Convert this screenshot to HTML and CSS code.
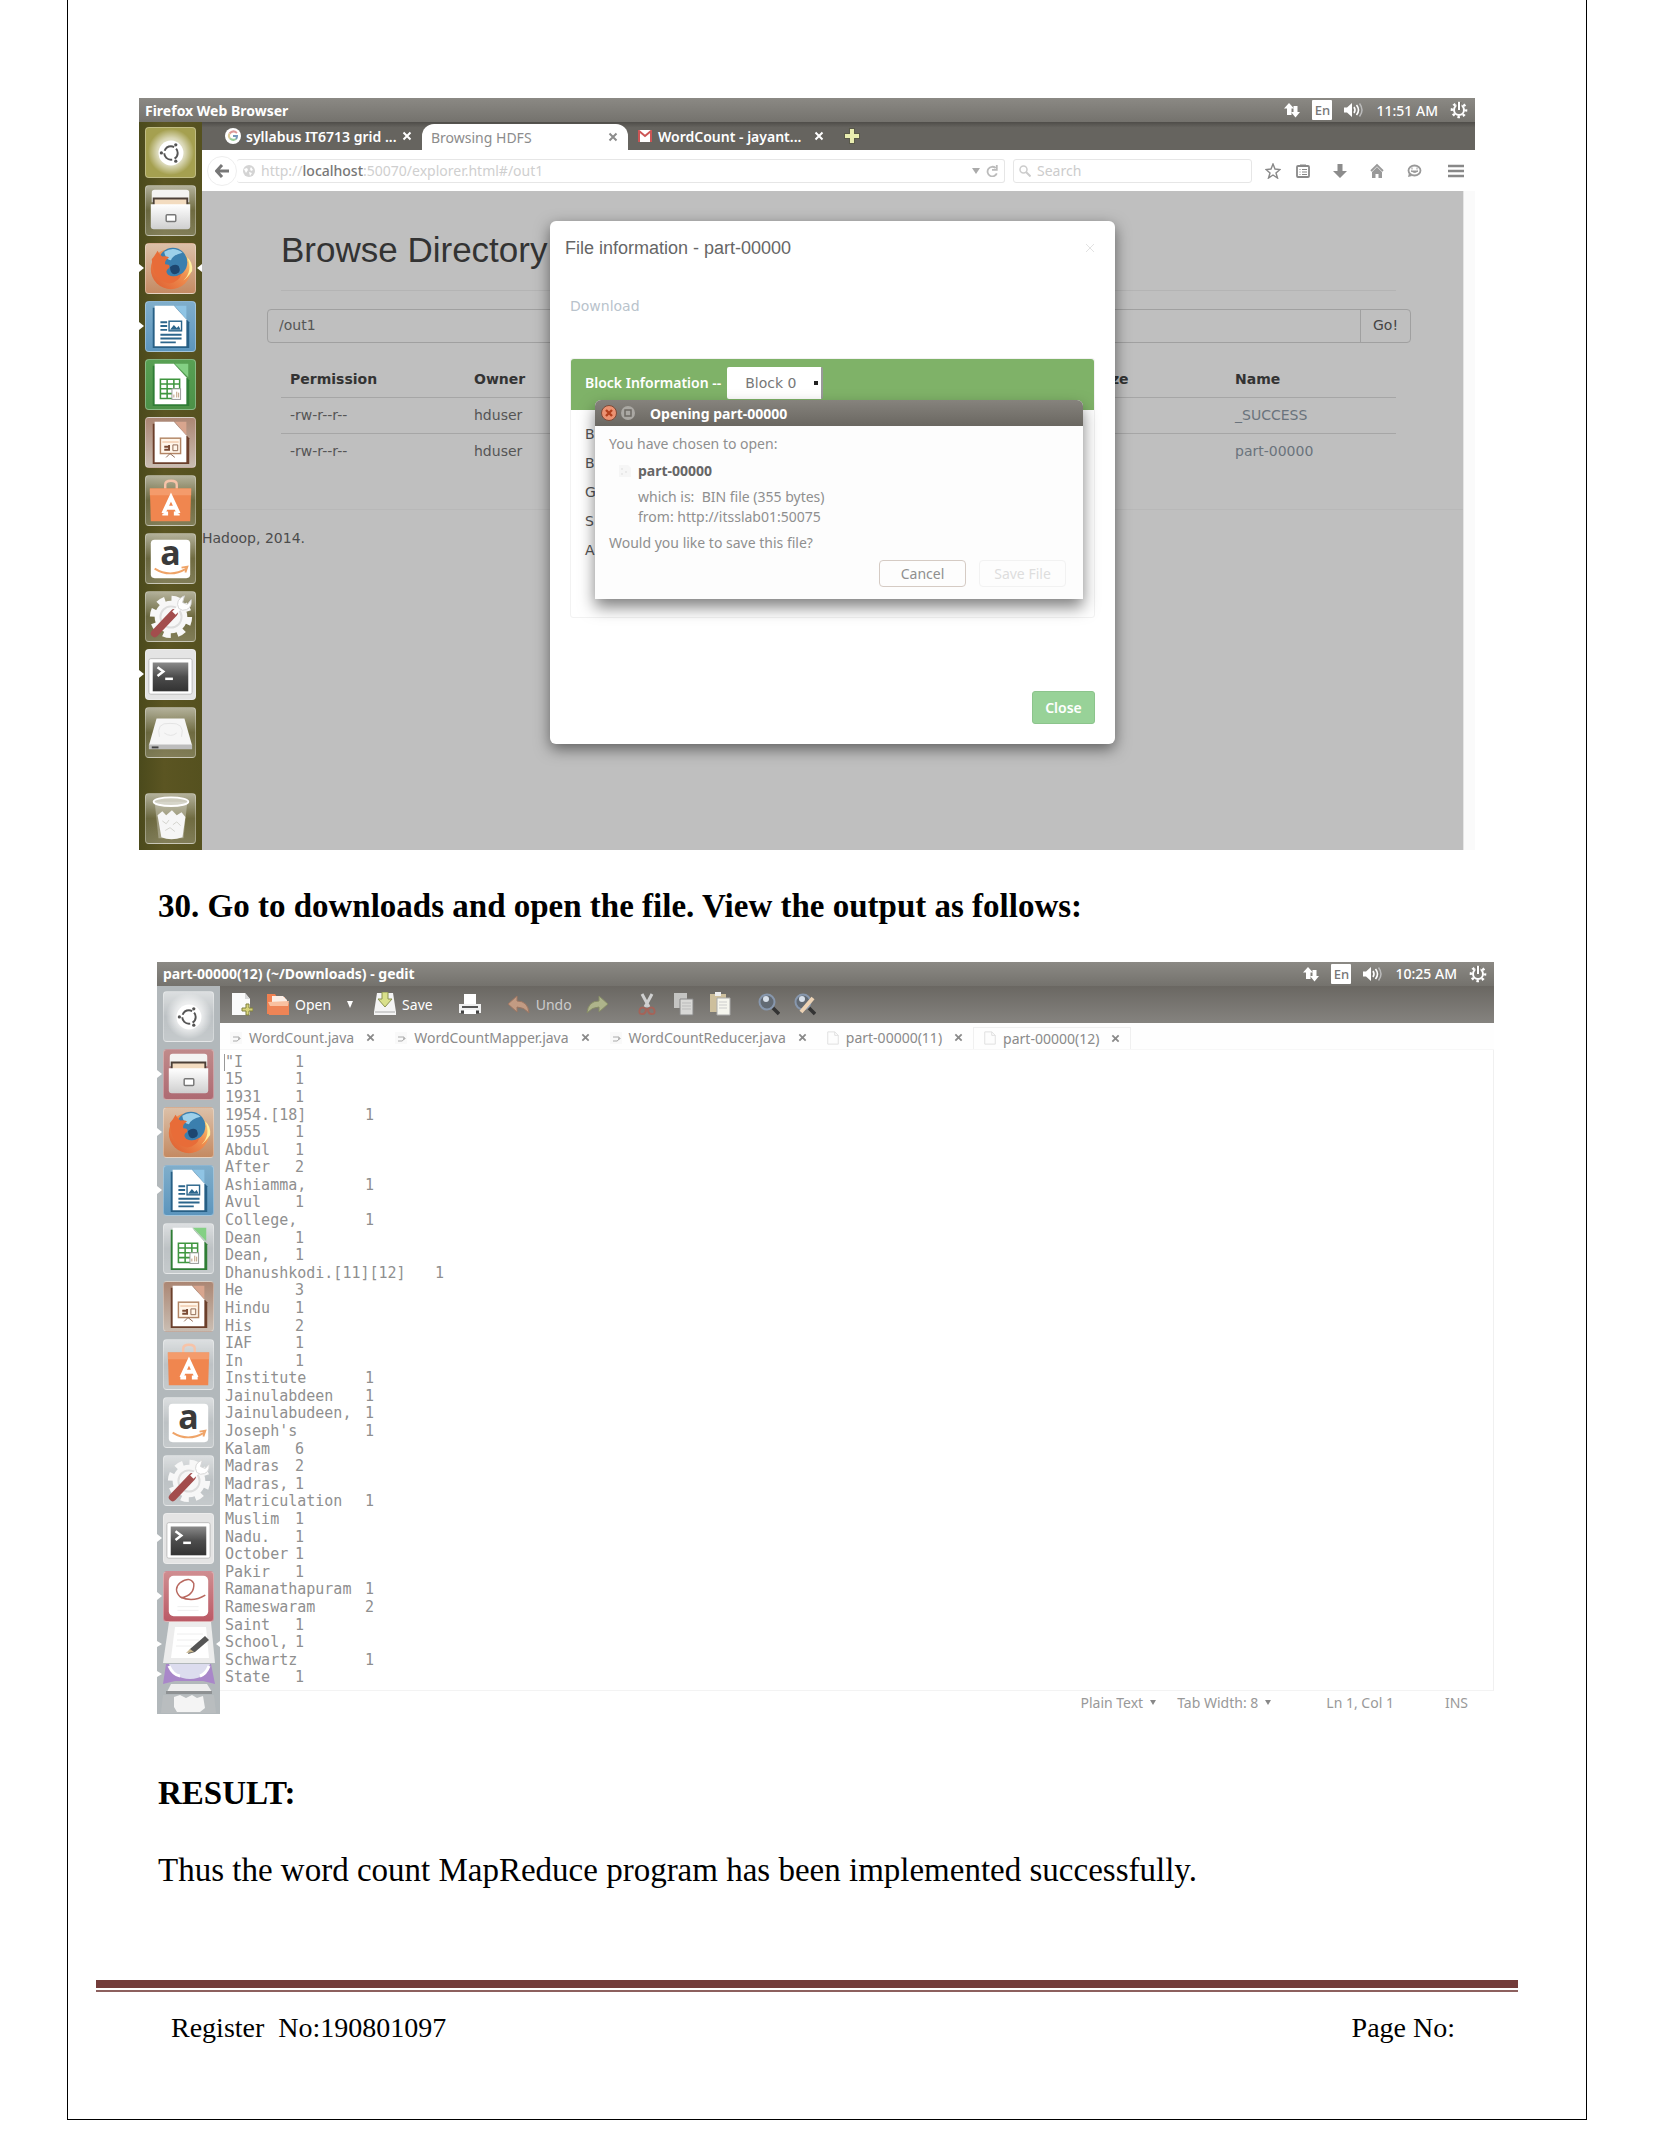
FILE: index.html
```html
<!DOCTYPE html>
<html lang="en">
<head>
<meta charset="utf-8">
<title>Word count MapReduce program</title>
<link rel="stylesheet" href="styles.css">
</head>
<body>
<svg class="defs" aria-hidden="true">
  <defs>
    <linearGradient id="drawer" x1="0" y1="0" x2="0" y2="1"><stop offset="0" stop-color="#fff"/><stop offset="1" stop-color="#cfcfcf"/></linearGradient>
    <linearGradient id="fox" x1="0" y1="1" x2="1" y2="0"><stop offset="0" stop-color="#dd5a2e"/><stop offset=".6" stop-color="#f09050"/><stop offset="1" stop-color="#ffe98a"/></linearGradient>
    <linearGradient id="screen" x1="0" y1="0" x2="0" y2="1"><stop offset="0" stop-color="#8a8a8a"/><stop offset=".5" stop-color="#4c4c4c"/><stop offset="1" stop-color="#333"/></linearGradient>
    <radialGradient id="halo"><stop offset="0" stop-color="#fff"/><stop offset=".6" stop-color="#fff" stop-opacity=".6"/><stop offset="1" stop-color="#fff" stop-opacity="0"/></radialGradient>
  </defs>
  <symbol id="i-dash" viewBox="0 0 51 51"><circle cx="26" cy="25" r="24" fill="url(#halo)"/><circle cx="26" cy="26" r="13" fill="#fff"/><circle cx="26" cy="26" r="7" fill="none" stroke="#555" stroke-width="2" stroke-dasharray="12 2.6" stroke-dashoffset="5"/><circle cx="16" cy="26" r="1.700" fill="#555"/><circle cx="31" cy="17.500" r="1.700" fill="#555"/><circle cx="31" cy="34.500" r="1.700" fill="#555"/></symbol>
  <symbol id="i-files" viewBox="0 0 51 51"><path d="M6 7q0-3 3-3h33q3 0 3 3v10H6z" fill="#f4f4f2"/><path d="M7 12h37v8H7z" fill="#4c4037"/><path d="M9 14h33v6H9z" fill="#f3dcc0"/><path d="M5 19h41v23q0 3-3 3H8q-3 0-3-3z" fill="url(#drawer)"/><rect x="21" y="30" width="10" height="7" rx="1" fill="#fff" stroke="#777" stroke-width="1.500"/></symbol>
  <symbol id="i-fox" viewBox="0 0 51 51"><circle cx="26" cy="26" r="21" fill="url(#fox)"/><circle cx="28" cy="19" r="15" fill="#3b7fae"/><path d="M19 8q10-6 19 1-10 2-12 8-6-1-7-9z" fill="#9dd0ea"/><path d="M25 24q5-4 9-1 3 6-2 8-7 2-7-7z" fill="#1d4670"/><path d="M6 16q4-5 6-9 2 4 5 6 4-1 7 1-5 3-4 7 6 0 4 4-5 3-1 7 6 4 14-1-3 9-13 10Q7 38 6 16z" fill="#e86c38"/><path d="M43 14q6 14-4 24 4-3 9-10 1-9-5-14z" fill="#fff0a0"/></symbol>
  <symbol id="i-writer" viewBox="0 0 51 51"><path d="M7 6h24l14 15v27H7z" fill="#275f85"/><path d="M9 4h20l13 14v28H9z" fill="#fff"/><path d="M30 4h12v14z" fill="#8fc4e4"/><path d="M15 21h7M15 25h7M15 29h7M15 34h22M15 38h22M15 42h16" stroke="#2c668c" stroke-width="2"/><rect x="24" y="20" width="13" height="10" fill="#fff" stroke="#2c668c" stroke-width="1.500"/><path d="M25 29l4-5 3 3 2-2 2 4z" fill="#2c668c"/></symbol>
  <symbol id="i-calc" viewBox="0 0 51 51"><path d="M7 6h24l14 15v27H7z" fill="#2f7d35"/><path d="M9 4h20l13 14v28H9z" fill="#fff"/><path d="M30 4h14v14z" fill="#84d084"/><path d="M15 20h20v20H15zM15 25h20M15 30h20M15 35h20M22 20v20M29 20v20" fill="none" stroke="#3f963f" stroke-width="1.600"/><rect x="27" y="30" width="9" height="11" fill="#fff" stroke="#999"/><path d="M29 39v-3M32 39v-6M34 39v-5" stroke="#b97"/></symbol>
  <symbol id="i-impress" viewBox="0 0 51 51"><path d="M7 6h24l14 15v27H7z" fill="#6b3f2b"/><path d="M9 4h20l13 14v28H9z" fill="#fff"/><path d="M30 4h12v14z" fill="#d8a58e"/><rect x="15" y="21" width="21" height="16" fill="#fff6ea" stroke="#b28565" stroke-width="1.500"/><path d="M17 25h17" stroke="#e8b58b"/><path d="M19 30h4M19 33h4M24 28v6" stroke="#7a4a33" stroke-width="2"/><path d="M28 28h5v6h-5zM21 41l4-4 5 4" fill="none" stroke="#8e6650"/></symbol>
  <symbol id="i-soft" viewBox="0 0 51 51"><path d="M20 14V9q0-4 6-4t6 4v5" fill="none" stroke="#f7c3a8" stroke-width="2.500"/><path d="M4 13h43l-1 34H5z" fill="#f0864f"/><path d="M4 13h43v7H4z" fill="#f49b6b"/><path d="M18 39l8-17 8 17M17 39h6M29 39h6M20 33h12" fill="none" stroke="#fff" stroke-width="4"/></symbol>
  <symbol id="i-amazon" viewBox="0 0 51 51"><rect x="5" y="6" width="41" height="40" rx="4" fill="#fff"/><path d="M9 36q16 10 33 0M37 35l6-1-2 6" fill="none" stroke="#efa468" stroke-width="2"/></symbol>
  <symbol id="i-tools" viewBox="0 0 51 51"><circle cx="26" cy="26" r="17" fill="#f7f7f7"/><circle cx="26" cy="26" r="19" fill="none" stroke="#f7f7f7" stroke-width="6" stroke-dasharray="8 6.920"/><circle cx="26" cy="26" r="11" fill="none" stroke="#ddd" stroke-width="2"/><path d="M9 43L29 22" stroke="#a34d4d" stroke-width="8" stroke-linecap="round"/><path d="M29 22l7-7" stroke="#fff" stroke-width="5"/><path d="M34 17q-4-9 6-13l-2 7 5 2 4-5q1 11-9 11z" fill="#fff" stroke="#d5d5d5"/></symbol>
  <symbol id="i-term" viewBox="0 0 51 51"><rect x="3" y="9" width="45" height="37" rx="2" fill="#fff" stroke="#bbb"/><rect x="7" y="13" width="37" height="30" fill="url(#screen)"/><path d="M12 18l6 4.500-6 4.500" fill="none" stroke="#fff" stroke-width="2.600"/><path d="M20 30h8" stroke="#fff" stroke-width="2.600"/></symbol>
  <symbol id="i-disk" viewBox="0 0 51 51"><path d="M11 11h29l8 28H3z" fill="#f6f6f6"/><path d="M3 38h45v5H3z" fill="#bdbdbd"/><path d="M6 41h7" stroke="#444" stroke-width="2"/><path d="M14 30q-4-15 11-14 16-1 12 14M19 26q7 5 13 0" fill="none" stroke="#e3e3e3"/></symbol>
  <symbol id="i-trash" viewBox="0 0 51 51"><path d="M9 8l4 38h26l4-38z" fill="#fff" fill-opacity=".3"/><ellipse cx="26" cy="8" rx="18" ry="4.500" fill="#e9e9e4" fill-opacity=".6" stroke="#fff" stroke-width="2"/><path d="M12 22l5-4 4 4 6-5 5 5 5-3 4 5-3 21q-12 4-22 0z" fill="#f6f6f6"/><path d="M17 28l4 3 3-4M28 32l4-3 4 4M20 38l5-3 5 4" fill="none" stroke="#d2d2cc"/></symbol>
  <symbol id="i-reader" viewBox="0 0 51 51"><rect x="5" y="4" width="41" height="42" rx="5" fill="#fff"/><path d="M43 24Q30 32 17 26 9 18 17 11q10-7 14 1 1 12-13 15" fill="none" stroke="#b8685f" stroke-width="1.500"/><path d="M14 36h22M14 40h22" stroke="#eee"/></symbol>
  <symbol id="i-net" viewBox="0 0 16 16"><path d="M5 1L0 6.500H3V13h4.500V6.500H10z" fill="#fff"/><path d="M11.500 15.500L16 10H13.500V4h-4v6H7z" fill="#fff"/></symbol>
  <symbol id="i-sound" viewBox="0 0 20 16"><path d="M0 5.500h3L8 1v14l-5-4.500H0z" fill="#fff"/><path d="M10 5q2 3 0 6M12.500 3q4 5 0 10" fill="none" stroke="#fff" stroke-width="1.600"/><path d="M15.500 1.500q5 6.500 0 13" fill="none" stroke="#bbb" stroke-width="1.500"/></symbol>
  <symbol id="i-gear" viewBox="0 0 18 18"><circle cx="9" cy="9" r="5" fill="none" stroke="#fff" stroke-width="2"/><circle cx="9" cy="9" r="7" fill="none" stroke="#fff" stroke-width="2.600" stroke-dasharray="2.500 3" stroke-dashoffset="1"/><path d="M9 1v8" stroke="#77746f" stroke-width="5"/><path d="M9 1v8" stroke="#fff" stroke-width="2"/></symbol>
  <symbol id="i-cross" viewBox="0 0 10 10"><path d="M1.500 1.500l7 7M8.500 1.500l-7 7" fill="none" stroke="currentColor" stroke-width="2"/></symbol>
  <symbol id="i-java" viewBox="0 0 14 14"><path d="M1 1h12v12H1z" fill="#f9f9f9"/><path d="M4 6h6q0 4-2 4H4M10 7h1v1h-1" fill="none" stroke="#aaa"/></symbol>
  <symbol id="i-doc" viewBox="0 0 14 16"><path d="M1 1h8l4 4v10H1zM9 1v4h4" fill="#fdfdfd" stroke="#ddd"/></symbol>
</svg>

<main class="sheet">
  <section class="desktop desktop-a">
    <header class="panel">
      <span class="panel-title">Firefox Web Browser</span>
      <div class="tray">
        <svg class="ic16"><use href="#i-net"/></svg><span class="lang">En</span><svg class="ic20"><use href="#i-sound"/></svg><span>11:51 AM</span><svg class="ic18"><use href="#i-gear"/></svg>
      </div>
    </header>
    <div class="workspace">
      <nav class="launcher olive">
        <ul>
          <li class="tile t-dash"><svg><use href="#i-dash"/></svg></li>
          <li class="tile t-plain"><svg><use href="#i-files"/></svg></li>
          <li class="tile t-fox run focus"><svg><use href="#i-fox"/></svg></li>
          <li class="tile t-blue run"><svg><use href="#i-writer"/></svg></li>
          <li class="tile t-green"><svg><use href="#i-calc"/></svg></li>
          <li class="tile t-brown"><svg><use href="#i-impress"/></svg></li>
          <li class="tile t-plain"><svg><use href="#i-soft"/></svg></li>
          <li class="tile t-plain"><svg><use href="#i-amazon"/></svg><span class="amazon-a">a</span></li>
          <li class="tile t-plain"><svg><use href="#i-tools"/></svg></li>
          <li class="tile t-light run"><svg><use href="#i-term"/></svg></li>
          <li class="tile t-plain"><svg><use href="#i-disk"/></svg></li>
          <li class="tile t-plain last"><svg><use href="#i-trash"/></svg></li>
        </ul>
      </nav>
      <div class="browser">
        <div class="btabs">
          <div class="btab first"><svg class="ic16" viewBox="0 0 16 16"><circle cx="8" cy="8" r="8" fill="#fff"/><path d="M12 5Q8 1.500 4.500 5.500" fill="none" stroke="#d99" stroke-width="2"/><path d="M4.500 5.500q-1.500 3 .500 5" fill="none" stroke="#dc9" stroke-width="2"/><path d="M5 10.500q3 2.500 6 .500" fill="none" stroke="#9c9" stroke-width="2"/><path d="M8 8h4q0 2-1 3" fill="none" stroke="#79b" stroke-width="2"/></svg><span>syllabus IT6713 grid ...</span><button class="x" aria-label="Close tab"><svg><use href="#i-cross"/></svg></button></div>
          <div class="btab active"><span>Browsing HDFS</span><button class="x" aria-label="Close tab"><svg><use href="#i-cross"/></svg></button></div>
          <div class="btab third"><svg class="ic14" viewBox="0 0 14 12"><path d="M0 0h14v12H0z" fill="#fff"/><path d="M1 12V1l6 5 6-5v11" fill="none" stroke="#c55" stroke-width="2"/></svg><span>WordCount - jayant...</span><button class="x" aria-label="Close tab"><svg><use href="#i-cross"/></svg></button></div>
          <button class="newtab" aria-label="New tab"><svg class="ic16" viewBox="0 0 16 16"><path d="M5 0h6v5h5v6h-5v5H5v-5H0V5h5z" fill="#59594a"/><path d="M6 1h4v5h5v4h-5v5H6v-5H1V6h5z" fill="#e9edb0"/></svg></button>
        </div>
        <div class="navbar">
          <button class="back" aria-label="Back"><svg viewBox="0 0 14 14"><path d="M7 1L1.500 7 7 13M2 7h12" fill="none" stroke="#777" stroke-width="3"/></svg></button>
          <div class="urlbox"><svg class="ic12" viewBox="0 0 12 12"><circle cx="6" cy="6" r="6" fill="#d4d4d4"/><path d="M1 4l3-1 1 2-2 3zM8 2l2 3-2 1-1-2zM6 7l3 1-2 3z" fill="#fff"/></svg><div class="url" role="textbox" aria-label="Address">http://<b>localhost</b>:50070/explorer.html#/out1</div><svg class="ic8" viewBox="0 0 8 6"><path d="M0 0h8L4 6z" fill="#aaa"/></svg><svg class="ic12" viewBox="0 0 10 10"><path d="M8 2.500A4 4 0 1 0 9 7M9 0v4H5" fill="none" stroke="#bbb" stroke-width="1.500"/></svg></div>
          <label class="searchbox"><svg class="ic12" viewBox="0 0 12 12"><circle cx="4.500" cy="4.500" r="3.500" fill="none" stroke="#ccc" stroke-width="1.500"/><path d="M7 7l4.500 4.500" stroke="#ccc" stroke-width="2"/></svg><input type="text" placeholder="Search" aria-label="Search"></label>
          <div class="navicons">
            <svg viewBox="0 0 16 16"><path d="M8 1l2 5 5 .500-4 3.500 1.500 5L8 12l-4.500 3L5 10 1 6.500 6 6z" fill="none" stroke="#888" stroke-width="1.400"/></svg>
            <svg viewBox="0 0 16 16"><rect x="2" y="3" width="12" height="11" rx="1" fill="none" stroke="#888" stroke-width="1.800"/><path d="M5 2h6M4.500 6.500h1M7 6.500h5M4.500 9h1M7 9h5M4.500 11.500h1M7 11.500h5" stroke="#888" stroke-width="1.200"/></svg>
            <svg viewBox="0 0 16 16"><path d="M5.500 1h5v7H15l-7 7-7-7h4.500z" fill="#8c8c8c"/></svg>
            <svg viewBox="0 0 16 16"><path d="M2 8l6-6 6 6" fill="none" stroke="#999" stroke-width="1.800"/><path d="M3 9l5-5 5 5v6H9.500v-4h-3v4H3z" fill="#999"/></svg>
            <svg viewBox="0 0 16 16"><ellipse cx="8.500" cy="7.500" rx="6" ry="5" fill="none" stroke="#999" stroke-width="1.800"/><path d="M2 14l1-4 3 3z" fill="#999"/><path d="M6 4.500v2M11 4.500v2M5 8h7q-3 3-7 0z" stroke="#999" fill="#999"/></svg>
            <svg viewBox="0 0 16 16"><path d="M0 3h16M0 8h16M0 13h16" stroke="#888" stroke-width="2.400"/></svg>
          </div>
        </div>
        <div class="viewport">
          <div class="webpage">
            <div class="container">
              <h1>Browse Directory</h1>
              <form class="pathform"><input type="text" value="/out1" aria-label="Directory"><button type="button">Go!</button></form>
              <table>
                <thead><tr><th class="c1">Permission</th><th class="c2">Owner</th><th class="c3">Size</th><th>Name</th></tr></thead>
                <tbody>
                  <tr><td>-rw-r--r--</td><td>hduser</td><td></td><td><a href="#">_SUCCESS</a></td></tr>
                  <tr><td>-rw-r--r--</td><td>hduser</td><td></td><td><a href="#">part-00000</a></td></tr>
                </tbody>
              </table>
            </div>
            <footer class="webfoot">Hadoop, 2014.</footer>
            <div class="modal">
              <div class="modal-head"><h2>File information - part-00000</h2><button class="modal-x" aria-label="Close"><svg viewBox="0 0 10 10"><path d="M1 1l8 8M9 1L1 9" stroke="#e2e2e2" stroke-width="1"/></svg></button></div>
              <a class="download" href="#">Download</a>
              <div class="block">
                <div class="block-head"><label for="blk">Block Information --</label><select id="blk"><option>Block 0</option></select></div>
                <ul class="block-body"><li>B</li><li>B</li><li>G</li><li>S</li><li>A</li></ul>
              </div>
              <button class="close">Close</button>
              <div class="dialog">
                <div class="dialog-bar">
                  <svg viewBox="0 0 16 16"><circle cx="8" cy="8" r="7.500" fill="#ec9272" stroke="#7d4a38"/><path d="M5 5l6 6M11 5l-6 6" stroke="#b3401d" stroke-width="2.400"/></svg>
                  <svg viewBox="0 0 16 16"><circle cx="8" cy="8" r="7" fill="#aaa8a3"/><rect x="5" y="5" width="6" height="6" fill="none" stroke="#6d6a64" stroke-width="1.500"/></svg>
                  <span>Opening part-00000</span>
                </div>
                <div class="dialog-body">
                  <p>You have chosen to open:</p>
                  <div class="file"><svg viewBox="0 0 14 14"><path d="M1 1h9l3 3v9H1z" fill="#f6f6f6"/><path d="M3 5h2M7 8h2M3 10h2" stroke="#ddd"/></svg><b>part-00000</b></div>
                  <p class="meta">which is:&nbsp; BIN file (355 bytes)</p>
                  <p class="meta">from: http://itsslab01:50075</p>
                  <p class="ask">Would you like to save this file?</p>
                  <div class="actions"><button>Cancel</button><button class="dim">Save File</button></div>
                </div>
              </div>
            </div>
          </div>
          <div class="scroll"></div>
        </div>
      </div>
    </div>
  </section>

  <h3 class="step">30. Go to downloads and open the file. View the output as follows:</h3>

  <section class="desktop desktop-b">
    <header class="panel">
      <span class="panel-title">part-00000(12) (~/Downloads) - gedit</span>
      <div class="tray">
        <svg class="ic16"><use href="#i-net"/></svg><span class="lang">En</span><svg class="ic20"><use href="#i-sound"/></svg><span>10:25 AM</span><svg class="ic18"><use href="#i-gear"/></svg>
      </div>
    </header>
    <div class="workspace">
      <nav class="launcher silver">
        <ul>
          <li class="tile t-plain"><svg><use href="#i-dash"/></svg></li>
          <li class="tile t-rose run"><svg><use href="#i-files"/></svg></li>
          <li class="tile t-fox run"><svg><use href="#i-fox"/></svg></li>
          <li class="tile t-blue run"><svg><use href="#i-writer"/></svg></li>
          <li class="tile t-plain"><svg><use href="#i-calc"/></svg></li>
          <li class="tile t-brown"><svg><use href="#i-impress"/></svg></li>
          <li class="tile t-plain"><svg><use href="#i-soft"/></svg></li>
          <li class="tile t-plain"><svg><use href="#i-amazon"/></svg><span class="amazon-a">a</span></li>
          <li class="tile t-plain"><svg><use href="#i-tools"/></svg></li>
          <li class="tile t-light run"><svg><use href="#i-term"/></svg></li>
          <li class="tile t-red run"><svg><use href="#i-reader"/></svg></li>
        </ul>
        <svg class="folded" viewBox="0 0 63 91">
          <path d="M0 19l5 3-5 3zM63 19l-4 3 4 3zM0 49l5 3-5 3z" fill="#fff"/>
          <path d="M12 0h42l4 41H6z" fill="#ececec"/><path d="M18 5h31l3 31H14z" fill="#fff"/><path d="M20 12h26M20 18h22M19 24h16" stroke="#eee"/><path d="M33 27l15-13 4 4-14 12-7 2z" fill="#555"/><path d="M29 31l4-4 4 3z" fill="#c9b78f"/>
          <path d="M9 42h45l4 20-12-3H18L6 62z" fill="#a987c9"/><path d="M12 42h41q-4 15-20 15T12 42z" fill="#dcdcee"/><path d="M12 44q4 9 11 10M52 44q-3 8-9 10" stroke="#fff" stroke-width="3" fill="none"/>
          <path d="M14 62h36l5 8H10z" fill="#eee"/><path d="M9 69h46v3H9z" fill="#8e9193"/><path d="M6 73h51l2 18H4z" fill="#b9bdbf"/><path d="M17 75l6-2 6 3 6-3 5 3 6-2 2 12-5 4H20l-3-5z" fill="#f4f4f4"/>
        </svg>
      </nav>
      <div class="gedit">
        <div class="toolbar">
          <button aria-label="New"><svg viewBox="0 0 22 24"><path d="M1 1h13l5 6v16H1z" fill="#fafafa"/><path d="M14 1v6h5z" fill="#d8d8d8"/><path d="M15 12h3v4h4v3h-4v4h-3v-4h-4v-3h4z" fill="#d6d27a" stroke="#80803c"/></svg></button>
          <button class="open"><svg viewBox="0 0 22 24"><path d="M0 2h8l2 3h8v17H0z" fill="#f08050"/><path d="M5 4h11l4 4v10H5z" fill="#fbeee6"/><path d="M0 12l22-1v12H2z" fill="#ee8456"/><path d="M1 10l21-1-1 5H3z" fill="#f9c0a0"/></svg>Open</button>
          <button class="drop" aria-label="Recent files"><svg class="ic8" viewBox="0 0 8 8"><path d="M1 1h6L4 8z" fill="#fff"/></svg></button>
          <button class="save"><svg viewBox="0 0 22 24"><path d="M3 1h16l3 19v3H0v-3z" fill="#f4f4f4"/><path d="M8 0h6v7h4l-7 8-7-8h4z" fill="#d9e08b" stroke="#8a9150"/><path d="M1 20h20" stroke="#aaa"/></svg>Save</button>
          <button class="print" aria-label="Print"><svg viewBox="0 0 22 24"><path d="M5 2h12v11H5z" fill="#fff"/><path d="M0 12h22v9H0z" fill="#f0f0f0"/><path d="M3 15h16" stroke="#555" stroke-width="2"/><path d="M2 20h18" stroke="#444" stroke-width="3"/><path d="M5 18h12v4H5z" fill="#fff"/></svg></button>
          <button class="undo"><svg viewBox="0 0 22 24"><path d="M9 4v5q11 0 12 12-5-6-12-6v5L0 12z" fill="#c29b83" stroke="#9d7763"/></svg>Undo</button>
          <button class="redo" aria-label="Redo"><svg viewBox="0 0 22 24"><path d="M13 4v5Q2 9 1 21q5-6 12-6v5l9-8z" fill="#aeb48b" stroke="#868c66"/></svg></button>
          <button class="cut" aria-label="Cut"><svg viewBox="0 0 22 24"><path d="M6 2l7 13M16 2L9 15" stroke="#d0d0d0" stroke-width="3"/><path d="M4 17q2-3 6 0 0 5-4 5t-2-5zM12 17q4-3 6 0 2 5-2 5t-4-5z" fill="none" stroke="#a56358" stroke-width="2"/></svg></button>
          <button class="copy" aria-label="Copy"><svg viewBox="0 0 22 24"><path d="M1 1h13v15H1z" fill="#c4c4c2"/><path d="M7 7h13v16H7z" fill="#d8d8d6" stroke="#888"/><path d="M9 11h9M9 14h9M9 17h9" stroke="#bbb"/></svg></button>
          <button class="paste" aria-label="Paste"><svg viewBox="0 0 22 24"><path d="M1 2h16v18H1z" fill="#cdbf9d"/><path d="M6 0h6v4H6z" fill="#eee"/><path d="M8 6h13v17H8z" fill="#f6f6ee" stroke="#aaa"/><path d="M10 10h8M10 13h8M10 16h8" stroke="#ccc"/></svg></button>
          <button class="find" aria-label="Find"><svg viewBox="0 0 22 24"><circle cx="9" cy="10" r="7.500" fill="#626a73" stroke="#8797ad" stroke-width="2"/><circle cx="8" cy="7" r="3" fill="#d8e0ea"/><path d="M15 16l6 6" stroke="#333" stroke-width="3.500"/></svg></button>
          <button aria-label="Replace"><svg viewBox="0 0 22 24"><circle cx="9" cy="10" r="7.500" fill="#626a73" stroke="#8797ad" stroke-width="2"/><circle cx="8" cy="7" r="3" fill="#d8e0ea"/><path d="M15 16l6 6" stroke="#333" stroke-width="3.500"/><path d="M7 20L19 6" stroke="#ecd2b4" stroke-width="4"/></svg></button>
        </div>
        <div class="gtabs">
          <div class="gtab"><svg class="ic14"><use href="#i-java"/></svg><span>WordCount.java</span><button class="x" aria-label="Close"><svg><use href="#i-cross"/></svg></button></div>
          <div class="gtab"><svg class="ic14"><use href="#i-java"/></svg><span>WordCountMapper.java</span><button class="x" aria-label="Close"><svg><use href="#i-cross"/></svg></button></div>
          <div class="gtab"><svg class="ic14"><use href="#i-java"/></svg><span>WordCountReducer.java</span><button class="x" aria-label="Close"><svg><use href="#i-cross"/></svg></button></div>
          <div class="gtab"><svg class="ic14"><use href="#i-doc"/></svg><span>part-00000(11)</span><button class="x" aria-label="Close"><svg><use href="#i-cross"/></svg></button></div>
          <div class="gtab on"><svg class="ic14"><use href="#i-doc"/></svg><span>part-00000(12)</span><button class="x" aria-label="Close"><svg><use href="#i-cross"/></svg></button></div>
        </div>
        <div class="editor">
          <div class="caret">"I&#9;1</div><div>15&#9;1</div><div>1931&#9;1</div><div>1954.[18]&#9;1</div><div>1955&#9;1</div><div>Abdul&#9;1</div><div>After&#9;2</div><div>Ashiamma,&#9;1</div><div>Avul&#9;1</div><div>College,&#9;1</div><div>Dean&#9;1</div><div>Dean,&#9;1</div><div>Dhanushkodi.[11][12]&#9;1</div><div>He&#9;3</div><div>Hindu&#9;1</div><div>His&#9;2</div><div>IAF&#9;1</div><div>In&#9;1</div><div>Institute&#9;1</div><div>Jainulabdeen&#9;1</div><div>Jainulabudeen,&#9;1</div><div>Joseph's&#9;1</div><div>Kalam&#9;6</div><div>Madras&#9;2</div><div>Madras,&#9;1</div><div>Matriculation&#9;1</div><div>Muslim&#9;1</div><div>Nadu.&#9;1</div><div>October&#9;1</div><div>Pakir&#9;1</div><div>Ramanathapuram&#9;1</div><div>Rameswaram&#9;2</div><div>Saint&#9;1</div><div>School,&#9;1</div><div>Schwartz&#9;1</div><div>State&#9;1</div>
        </div>
        <div class="status">
          <button>Plain Text <svg class="ic6" viewBox="0 0 6 5"><path d="M0 0h6L3 5z" fill="#888"/></svg></button>
          <button>Tab Width: 8 <svg class="ic6" viewBox="0 0 6 5"><path d="M0 0h6L3 5z" fill="#888"/></svg></button>
          <span class="pos">Ln 1, Col 1</span><span class="ins">INS</span>
        </div>
      </div>
    </div>
  </section>

  <h3 class="result">RESULT:</h3>
  <p class="conclusion">Thus the word count MapReduce program has been implemented successfully.</p>
  <footer class="sheet-foot"><span>Register&nbsp; No:190801097</span><span>Page No:</span></footer>
</main>
</body>
</html>
```
FILE: styles.css
```css
* { box-sizing: border-box; }
body { margin: 0; background: #fff; padding-bottom: 33px; }
h1, h2, h3, p, ul { margin: 0; padding: 0; font-weight: normal; }
ul { list-style: none; }
button { font: inherit; color: inherit; border: 0; background: none; padding: 0; display: flex; align-items: center; }
svg { flex: none; display: block; }
.defs { position: absolute; width: 0; height: 0; }
.ic6 { width: 6px; height: 5px; }
.ic8 { width: 8px; height: 8px; }
.ic12 { width: 12px; height: 12px; }
.ic14 { width: 14px; height: 14px; }
.ic16 { width: 16px; height: 16px; }
.ic18 { width: 18px; height: 18px; }
.ic20 { width: 20px; height: 16px; }
.x svg { width: 10px; height: 10px; }

.sheet { margin: 0 67px; border: 1px solid #000; border-top: 0; padding-top: 98px; color: #000; font-family: "Liberation Serif", "Times New Roman", serif; }
.step, .result, .conclusion { font-size: 33px; line-height: 36px; margin-left: 90px; }
.step, .result { font-weight: bold; }
.step { margin-top: 38px; margin-bottom: 38px; }
.result { margin-top: 61px; }
.conclusion { margin-top: 41px; }
.sheet-foot { margin: 92px 68px 0 28px; padding: 24px 63px 75px 75px; display: flex; justify-content: space-between; font-size: 28px; line-height: 32px; position: relative; border-top: 8px solid #733c3a; }
.sheet-foot::before { content: ""; position: absolute; left: 0; right: 0; top: 2px; height: 2px; background: #8d605e; }

.desktop { aspect-ratio: 16 / 9; display: flex; flex-direction: column; font-family: "Noto Sans", sans-serif; font-size: 14px; overflow: hidden; }
.desktop-a { margin: 0 111px 0 71px; }
.desktop-b { margin: 0 92px 0 89px; }
.panel { height: 24px; flex: none; display: flex; justify-content: space-between; align-items: center; padding: 0 7px 0 6px; background: linear-gradient(#8b8984, #74726d); color: #fff; }
.panel-title { font-weight: bold; }
.tray { display: flex; align-items: center; gap: 12px; font-weight: 500; }
.lang { width: 20px; height: 20px; line-height: 20px; text-align: center; background: #fff; color: #777; font-size: 13px; border-radius: 1px; }
.workspace { flex: 1; min-height: 0; display: flex; }

.launcher { width: 63px; flex: none; padding-top: 5px; overflow: hidden; }
.launcher ul { display: flex; flex-direction: column; align-items: center; gap: 7px; }
.olive { background: linear-gradient(90deg, #4b4a1c, #5b5522 40%, #55511f); }
.silver { background: #b2b8bb; }
.tile { width: 51px; height: 51px; border-radius: 4px; position: relative; border: 1px solid rgba(255, 255, 255, .3); flex: none; }
.tile svg { width: 49px; height: 49px; }
.last { margin-top: 28px; }
.t-plain { background: linear-gradient(rgba(255, 255, 255, .55), rgba(255, 255, 255, .15) 50%, rgba(255, 255, 255, .25)); }
.t-dash { background: #a5a050; }
.t-fox { background: linear-gradient(#dcc0a8, #c48a62); }
.t-blue { background: linear-gradient(#7faecb, #5c95bd); }
.t-green { background: linear-gradient(#58a053, #4c9148); }
.t-brown { background: linear-gradient(#ab8673, #c9bdb2); }
.t-rose { background: linear-gradient(#c08a8a, #ae6a72); }
.t-red { background: linear-gradient(#cf8d90, #bb5a66); }
.t-light { background: #e4e4e4; }
.run::before { content: ""; position: absolute; left: -7px; top: 20px; border: 4px solid transparent; border-left: 5px solid #fff; border-right: 0; }
.focus::after { content: ""; position: absolute; right: -7px; top: 20px; border: 4px solid transparent; border-right: 5px solid #fff; border-left: 0; }
.amazon-a { position: absolute; left: 0; right: 0; top: 0; text-align: center; font: bold 34px/36px "Noto Sans", sans-serif; color: #3a3a3a; }
.folded { width: 63px; height: 91px; }

.browser, .gedit { flex: 1; min-width: 0; display: flex; flex-direction: column; }
.btabs { height: 28px; flex: none; display: flex; background: linear-gradient(#4f4d49, #66645f 20%, #66645f); color: #fff; }
.btab { display: flex; align-items: center; gap: 6px; font-weight: 600; white-space: nowrap; }
.btab .x { margin-left: auto; }
.first { width: 220px; padding: 0 10px 0 23px; }
.first { gap: 5px; }
.active { width: 206px; padding: 0 10px 0 9px; background: #fff; color: #8c8c8c; font-weight: normal; border-radius: 12px 12px 0 0; margin-top: 2px; }
.third { width: 200px; padding: 0 4px 0 10px; }
.third .ic14 { height: 12px; }
.newtab { margin-left: 16px; }
.navbar { height: 41px; flex: none; display: flex; align-items: center; background: #fff; padding: 0 11px 0 5px; }
.back { width: 30px; height: 30px; border-radius: 50%; border: 1px solid #eee; justify-content: center; }
.back svg { width: 14px; height: 14px; }
.urlbox, .searchbox { height: 24px; display: flex; align-items: center; border: 1px solid #e6e6e6; border-radius: 3px; }
.urlbox { flex: 1; border-left: 0; padding: 0 6px; gap: 6px; }
.url { flex: 1; color: #cfcfcf; white-space: nowrap; }
.url b { font-weight: 500; color: #777; }
.searchbox { width: 239px; margin-left: 8px; padding: 0 5px; gap: 6px; }
.searchbox input { border: 0; outline: 0; width: 100%; font: inherit; background: none; padding: 0; }
.searchbox input::placeholder { color: #ccc; opacity: 1; }
.navicons { margin-left: 13px; display: flex; gap: 21px; }
.navicons svg { width: 16px; height: 16px; }
.navicons svg:first-child { margin-right: -7px; }
.navicons svg:last-child { margin-left: 5px; }

.viewport { flex: 1; min-height: 0; display: flex; }
.webpage { flex: 1; min-width: 0; background: #bfbfbf; position: relative; color: #555; font-family: "DejaVu Sans", sans-serif; font-size: 14px; }
.scroll { width: 12px; background: #fafafa; border-left: 1px solid #e5e5e5; }
.container { margin: 0 67px 0 79px; padding-top: 39px; }
.container h1 { font-family: "Liberation Sans", Arial, sans-serif; font-size: 35px; line-height: 40px; color: #333; padding-bottom: 20px; border-bottom: 1px solid #b4b4b4; }
.pathform { display: flex; margin: 18px -15px 0 -14px; height: 34px; border: 1px solid #a0a0a0; border-radius: 4px; }
.pathform input { flex: 1; border: 0; background: none; font: inherit; color: #555; padding: 0 11px 3px; }
.pathform button { width: 50px; justify-content: center; border-left: 1px solid #a0a0a0; color: #444; padding-bottom: 2px; }
table { width: 100%; margin-top: 18px; border-collapse: collapse; table-layout: fixed; }
th, td { text-align: left; height: 36px; padding: 0 9px; line-height: 20px; border-bottom: 1px solid #a6a6a6; }
tr:last-child td { border-bottom: 0; }
th { color: #333; }
.c1 { width: 184px; }
.c2 { width: 622px; }
.c3 { width: 139px; }
td a { color: #6a737c; text-decoration: none; }
.webfoot { margin-top: 40px; padding-top: 18px; border-top: 1px solid #b8b8b8; line-height: 20px; color: #4c4c4c; }

.modal { position: absolute; left: 0; right: 0; top: 30px; margin: 0 auto; width: 565px; height: 523px; background: #fff; border-radius: 6px; box-shadow: 0 5px 15px rgba(0, 0, 0, .5); padding: 15px 20px 20px; display: flex; flex-direction: column; }
.modal-head { display: flex; justify-content: space-between; margin-left: -5px; }
.modal-head h2 { font: 18px/24px "Liberation Sans", Arial, sans-serif; color: #666; }
.modal-x svg { width: 10px; height: 10px; }
.download { margin-top: 36px; line-height: 20px; color: #b9c3cc; text-decoration: none; }
.block { margin-top: 42px; height: 260px; border: 1px solid #f2f2f2; border-radius: 3px; }
.block-head { height: 51px; background: #7fb268; border-radius: 3px 3px 0 0; display: flex; align-items: center; gap: 6px; padding: 0 0 4px 14px; color: #fff; font-weight: 600; font-family: "Noto Sans", sans-serif; }
.block-head select { appearance: none; width: 96px; height: 32px; border: 0; border-right: 2px solid #999; border-radius: 2px; padding: 0 18px; font: 14px "DejaVu Sans", sans-serif; color: #777; background: linear-gradient(#222, #222) 87px 14px / 4px 4px no-repeat #fff; }
.block-body { padding: 10px 0 0 14px; line-height: 29px; }
.close { margin-top: auto; align-self: flex-end; width: 63px; height: 33px; justify-content: center; background: #98d298; border: 1px solid #8cc48c; border-radius: 3px; color: #fff; font: 600 14px "Noto Sans", sans-serif; }

.dialog { position: absolute; left: 45px; top: 179px; width: 488px; background: #fdfdfd; box-shadow: 0 8px 16px rgba(0, 0, 0, .5); border-radius: 6px 6px 0 0; font: 14px "Noto Sans", sans-serif; color: #8f8f8f; }
.dialog-bar { height: 26px; display: flex; align-items: center; gap: 3px; padding-left: 6px; background: linear-gradient(#86837d, #6a6761); border-radius: 6px 6px 0 0; color: #fff; font-weight: bold; }
.dialog-bar svg { width: 16px; height: 16px; }
.dialog-bar span { margin-left: 11px; }
.dialog-body { padding: 8px 17px 12px 14px; line-height: 20px; }
.file { display: flex; align-items: center; gap: 6px; margin: 7px 0 6px 9px; color: #666; }
.file svg { width: 14px; height: 14px; }
.meta { padding-left: 29px; }
.ask { margin-top: 6px; }
.actions { display: flex; justify-content: flex-end; gap: 13px; margin-top: 7px; }
.actions button { width: 87px; height: 27px; justify-content: center; border: 1px solid #d5cbc4; border-radius: 4px; }
.actions .dim { color: #ddd; border-color: #f2f2f2; }

.toolbar { height: 37px; flex: none; display: flex; align-items: center; padding-left: 11px; background: linear-gradient(#6a6762, #85837f); color: #fff; }
.toolbar button { gap: 6px; }
.toolbar svg:not(.ic8) { width: 22px; height: 24px; }
.toolbar .open { margin-left: 14px; }
.toolbar .drop { margin-left: 15px; }
.toolbar .save { margin-left: 20px; }
.toolbar .print { margin-left: 26px; }
.toolbar .undo { margin-left: 27px; color: #ccc; }
.toolbar .redo { margin-left: 14px; }
.toolbar .cut { margin-left: 28px; }
.toolbar .copy { margin-left: 15px; }
.toolbar .paste { margin-left: 14px; }
.toolbar .find { margin-left: 27px; margin-right: 14px; }
.gtabs { height: 27px; flex: none; display: flex; padding-top: 4px; color: #8a8a8a; border-bottom: 1px solid #f7f7f7; background: #fefefe; }
.gtab { display: flex; align-items: center; gap: 6px; padding: 0 10px 0 9px; }
.gtab .x { margin-left: 6px; }
.gtab .x svg { width: 9px; height: 9px; }
.gtab.on { border: 1px solid #f0f0f0; border-bottom: 0; }
.editor { flex: 1; min-height: 0; display: grid; grid-auto-rows: 1fr; align-items: center; padding: 4px 0 3px 5px; font: 15px/17px "DejaVu Sans Mono", monospace; color: #8f8f8f; white-space: pre; tab-size: 70px; border-bottom: 1px solid #f3f3f3; border-right: 1px solid #f0f0f0; }
.caret { box-shadow: -1px 0 #999; }
.status { height: 23px; flex: none; display: flex; align-items: center; justify-content: flex-end; padding-right: 26px; color: #999; }
.status button { gap: 7px; margin-right: 21px; }
.pos { margin-left: 34px; }
.ins { margin-left: 51px; }
```
